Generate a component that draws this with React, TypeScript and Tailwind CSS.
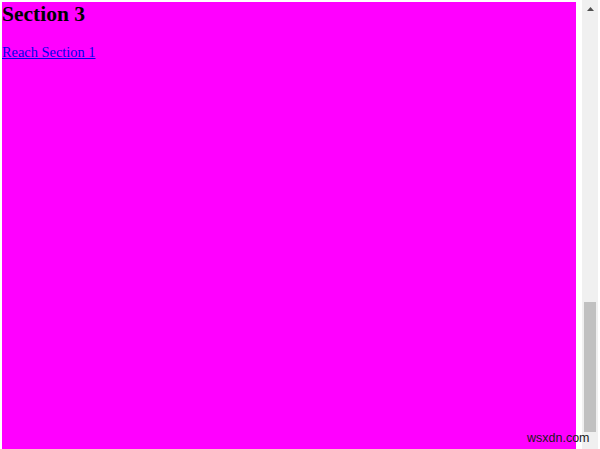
import React from 'react';

export default function App() {
  return (
    <div className="relative flex h-[449px] w-[600px] overflow-hidden bg-white">
      <div className="pl-[2px] pt-[2px]">
        <div className="h-[447px] w-[574px] bg-[#ff00ff] font-['Liberation_Serif',serif] text-black">
          <h2 className="text-[21.5px] font-bold leading-[24px]">Section 3</h2>
          <a href="#section1" className="mt-[17px] block text-[14.4px] leading-[18px] text-[#0000ee] underline">
            Reach Section 1
          </a>
        </div>
      </div>
      <div className="ml-[6px] flex h-[449px] w-[16px] flex-col bg-[#f0f0f0]">
        <div className="flex h-[17px] items-center justify-center">
          <svg width="7" height="4" viewBox="0 0 7 4">
            <path d="M3.5 0 L7 4 L0 4 Z" fill="#505050" />
          </svg>
        </div>
        <div className="flex-1" />
        <div className="mx-[2px] mb-[17px] h-[130px] bg-[#c1c1c1]" />
      </div>
      <span className="absolute left-[527px] top-[431px] font-['Liberation_Sans',sans-serif] text-[12.5px] leading-[15px] text-[#1a1a1a]">
        wsxdn.com
      </span>
    </div>
  );
}
